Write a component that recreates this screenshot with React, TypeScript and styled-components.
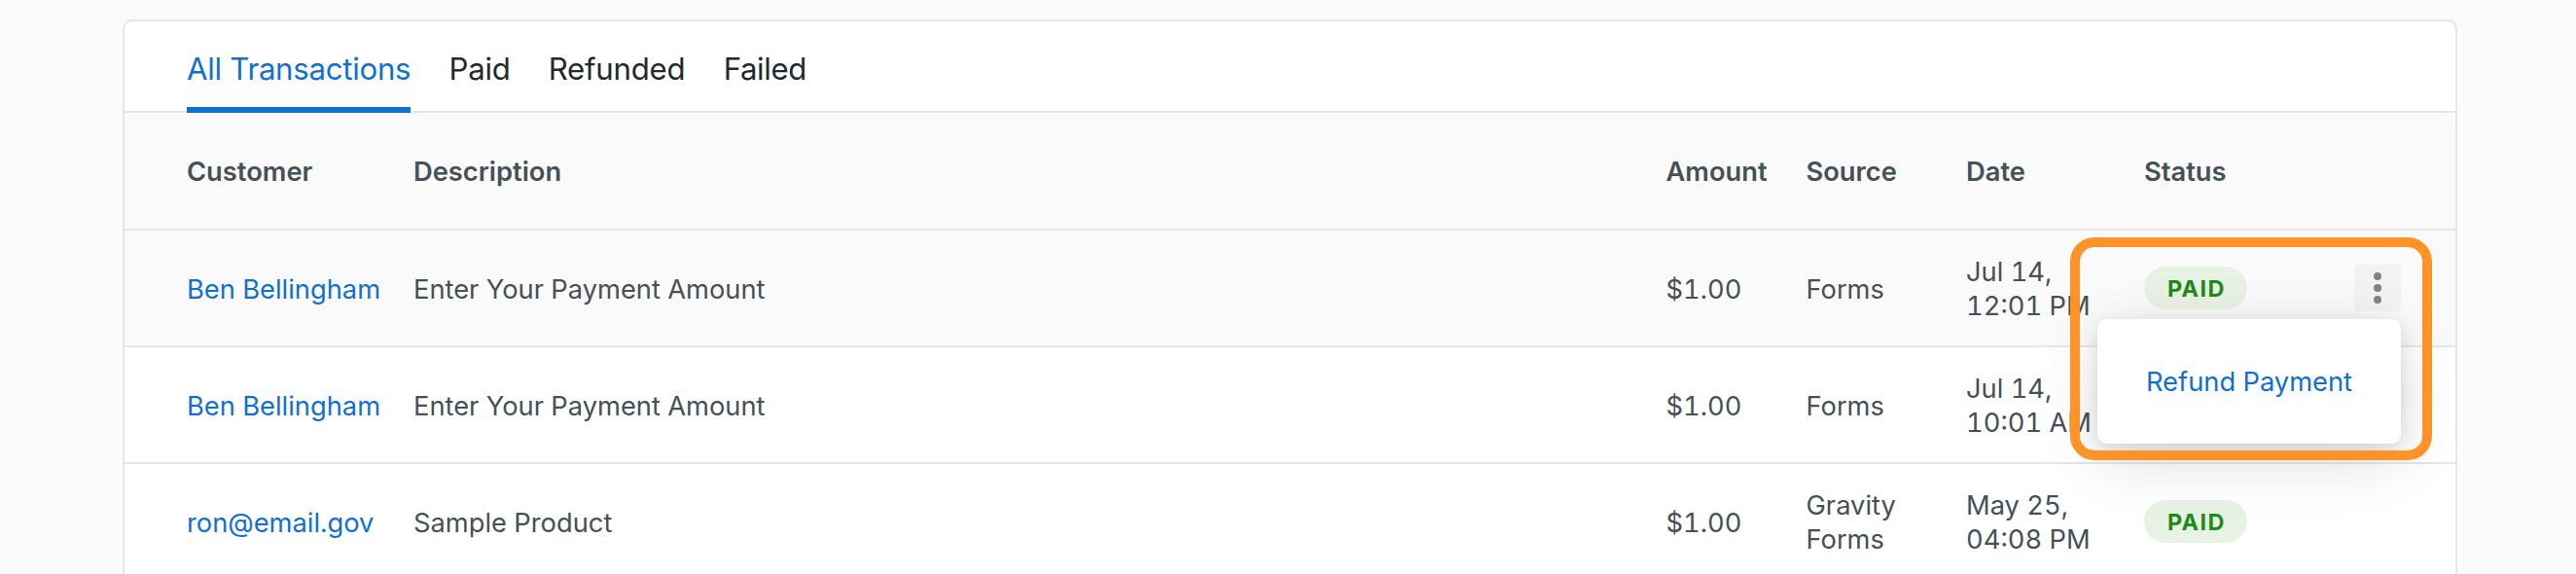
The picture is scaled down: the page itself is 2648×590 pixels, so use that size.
import { useState } from "react";
import styled, { createGlobalStyle } from "styled-components";

const GlobalStyle = createGlobalStyle`
  * {
    box-sizing: border-box;
  }
  body {
    margin: 0;
    background: #fafbfd;
    color: #465057;
    font-family: Inter, "Liberation Sans", sans-serif;
    font-size: 27.3px;
    line-height: 35px;
    font-variant-numeric: tabular-nums;
  }
`;

const Page = styled.main`
  height: 590px;
  padding: 20px 122px 0 126px;
  overflow: hidden;
`;

const Card = styled.section`
  border: 2px solid #e5e6e7;
  border-radius: 10px;
  background: #fff;
`;

const Tabs = styled.nav`
  display: flex;
  gap: 39.3px;
  height: 94px;
  padding: 0 64px;
  border-bottom: 2px solid #e5e6e7;
`;

const Tab = styled.button<{ $active: boolean; $spacing: number }>`
  height: 94px;
  padding: 10px 0 0;
  border: 0;
  border-bottom: 6px solid ${({ $active }) => ($active ? "#1070d1" : "transparent")};
  background: none;
  color: ${({ $active }) => ($active ? "#1070d1" : "#23282d")};
  font-family: inherit;
  font-size: 31.2px;
  letter-spacing: ${({ $spacing }) => $spacing}px;
  white-space: nowrap;
`;

const Row = styled.div<{ $shaded?: boolean }>`
  position: relative;
  display: grid;
  grid-template-columns: 233px 1287.5px 144px 164.5px 183px 1fr 48px;
  align-items: center;
  height: 120px;
  padding: 0 56px 0 64px;
  border-bottom: 2px solid #e5e6e7;
  background: ${({ $shaded }) => ($shaded ? "#fafafa" : "#fff")};
`;

const HeadRow = styled(Row)`
  height: 121px;
  border-radius: 10px 10px 0 0;
  font-weight: 600;
`;

const Cell = styled.div`
  padding-top: 2px;
`;

const DateCell = styled(Cell)`
  width: 140px;
`;

const SourceCell = styled(Cell)`
  width: 110px;
`;

const Customer = styled.a`
  color: #1070d1;
  text-decoration: none;
`;

const Badge = styled.span`
  justify-self: start;
  height: 44px;
  padding: 0 22.5px 0 24px;
  border-radius: 22px;
  background: #e7f1e4;
  color: #1f8a17;
  font-size: 23.4px;
  font-weight: 700;
  line-height: 45px;
  letter-spacing: 1.4px;
`;

const MoreButton = styled.button`
  display: flex;
  width: 48px;
  height: 48px;
  padding: 0;
  border: 0;
  border-radius: 4px;
  background: #f2f2f2;
`;

const Menu = styled.div`
  position: absolute;
  z-index: 1;
  top: 91px;
  right: 56px;
  display: flex;
  align-items: center;
  justify-content: center;
  width: 312px;
  height: 128px;
  border-radius: 10px;
  background: #fff;
  box-shadow: 0 4px 16px rgba(0, 0, 0, 0.1), 0 16px 64px rgba(0, 0, 0, 0.14);
  color: #1070d1;
`;

const Highlight = styled.div`
  position: absolute;
  z-index: 2;
  top: 7px;
  right: 24px;
  width: 372px;
  height: 229px;
  border: 10px solid #ff9327;
  border-radius: 25px;
  pointer-events: none;
`;

const tabs = [
  { label: "All Transactions", spacing: -0.27 },
  { label: "Paid", spacing: -0.3 },
  { label: "Refunded", spacing: -0.25 },
  { label: "Failed", spacing: -0.35 },
];

const columns = ["Customer", "Description", "Amount", "Source", "Date", "Status"];

const transactions = [
  {
    customer: "Ben Bellingham",
    description: "Enter Your Payment Amount",
    amount: "$1.00",
    source: "Forms",
    date: "Jul 14, 12:01 PM",
    status: "PAID",
    menuOpen: true,
  },
  {
    customer: "Ben Bellingham",
    description: "Enter Your Payment Amount",
    amount: "$1.00",
    source: "Forms",
    date: "Jul 14, 10:01 AM",
  },
  {
    customer: "ron@email.gov",
    description: "Sample Product",
    amount: "$1.00",
    source: "Gravity Forms",
    date: "May 25, 04:08 PM",
    status: "PAID",
  },
];

const MoreIcon = () => (
  <svg width="48" height="48" viewBox="0 0 48 48" fill="#808388">
    <circle cx="24" cy="12" r="4" />
    <circle cx="24" cy="24" r="4" />
    <circle cx="24" cy="36" r="4" />
  </svg>
);

export default function App() {
  const [activeTab, setActiveTab] = useState("All Transactions");

  return (
    <Page>
      <GlobalStyle />
      <Card>
        <Tabs>
          {tabs.map(({ label, spacing }) => (
            <Tab
              key={label}
              $active={label === activeTab}
              $spacing={spacing}
              onClick={() => setActiveTab(label)}
            >
              {label}
            </Tab>
          ))}
        </Tabs>
        <HeadRow $shaded>
          {columns.map((column) => (
            <Cell key={column}>{column}</Cell>
          ))}
        </HeadRow>
        {transactions.map((item) => (
          <Row key={item.date} $shaded={item.menuOpen}>
            <Cell>
              <Customer>{item.customer}</Customer>
            </Cell>
            <Cell>{item.description}</Cell>
            <Cell>{item.amount}</Cell>
            <SourceCell>{item.source}</SourceCell>
            <DateCell>{item.date}</DateCell>
            {item.status && <Badge>{item.status}</Badge>}
            {item.menuOpen && (
              <>
                <MoreButton aria-label="More actions">
                  <MoreIcon />
                </MoreButton>
                <Menu>Refund Payment</Menu>
                <Highlight />
              </>
            )}
          </Row>
        ))}
      </Card>
    </Page>
  );
}
